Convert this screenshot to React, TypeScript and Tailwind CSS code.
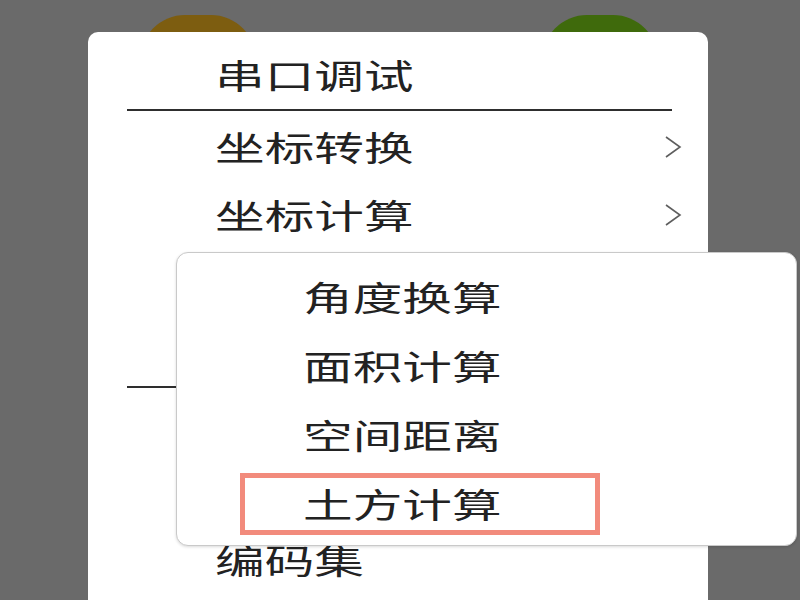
import React from 'react';

const FONT = { fontFamily: '"Noto Sans CJK SC", "Noto Sans", sans-serif' };

function Label({ text }: { text: string }) {
  return (
    <span className="inline-block origin-left scale-x-[1.46] text-[34px] leading-none text-[#222222]">
      {text}
    </span>
  );
}

function Chevron() {
  return (
    <svg width="18" height="24" viewBox="0 0 18 24" fill="none">
      <polyline points="2,2 16,12 2,22" stroke="#5e5e5e" strokeWidth="1.6" strokeLinejoin="miter" />
    </svg>
  );
}

function MenuRow({ text, sub }: { text: string; sub?: boolean }) {
  return (
    <div className="flex h-[68px] items-center justify-between pl-[127px] pr-[26px]">
      <Label text={text} />
      {sub && <Chevron />}
    </div>
  );
}

const subItems = ['角度换算', '面积计算', '空间距离'];

export default function App() {
  return (
    <div className="relative h-[600px] w-[800px] overflow-hidden bg-[#6a6a6a]" style={FONT}>
      {/* app icons behind the dialog */}
      <div className="absolute left-[140px] top-[15px] h-[90px] w-[116px] rounded-full bg-[#7d5d10]" />
      <div className="absolute left-[542px] top-[15px] h-[90px] w-[116px] rounded-full bg-[#3f6a0c]" />

      {/* main menu */}
      <div className="absolute left-[88px] top-[32px] h-[600px] w-[620px] rounded-[10px] bg-white pt-[9px]">
        <MenuRow text="串口调试" />
        <div className="mb-[2px] ml-[39px] mr-[36px] h-[2px] bg-[#2e2e2e]" />
        <MenuRow text="坐标转换" sub />
        <MenuRow text="坐标计算" sub />
        <MenuRow text="" />
        <MenuRow text="" />
        <div className="mb-[2px] ml-[39px] mr-[36px] mt-[1px] h-[2px] bg-[#2e2e2e]" />
        <MenuRow text="" />
        <MenuRow text="" />
        <MenuRow text="编码集" />
      </div>

      {/* sub menu */}
      <div className="absolute left-[176px] top-[252px] h-[294px] w-[621px] rounded-[12px] border border-[#c9c9c9] bg-white pt-[9px] shadow-[0_1px_3px_rgba(0,0,0,0.15)]">
        {subItems.map((t) => (
          <div key={t} className="flex h-[69px] items-center pl-[126px]">
            <Label text={t} />
          </div>
        ))}
        <div className="flex h-[69px] items-center pl-[63px]">
          <div className="flex h-[62px] w-[360px] items-center border-[5px] border-[#f28b7c] pl-[58px]">
            <Label text="土方计算" />
          </div>
        </div>
      </div>
    </div>
  );
}
